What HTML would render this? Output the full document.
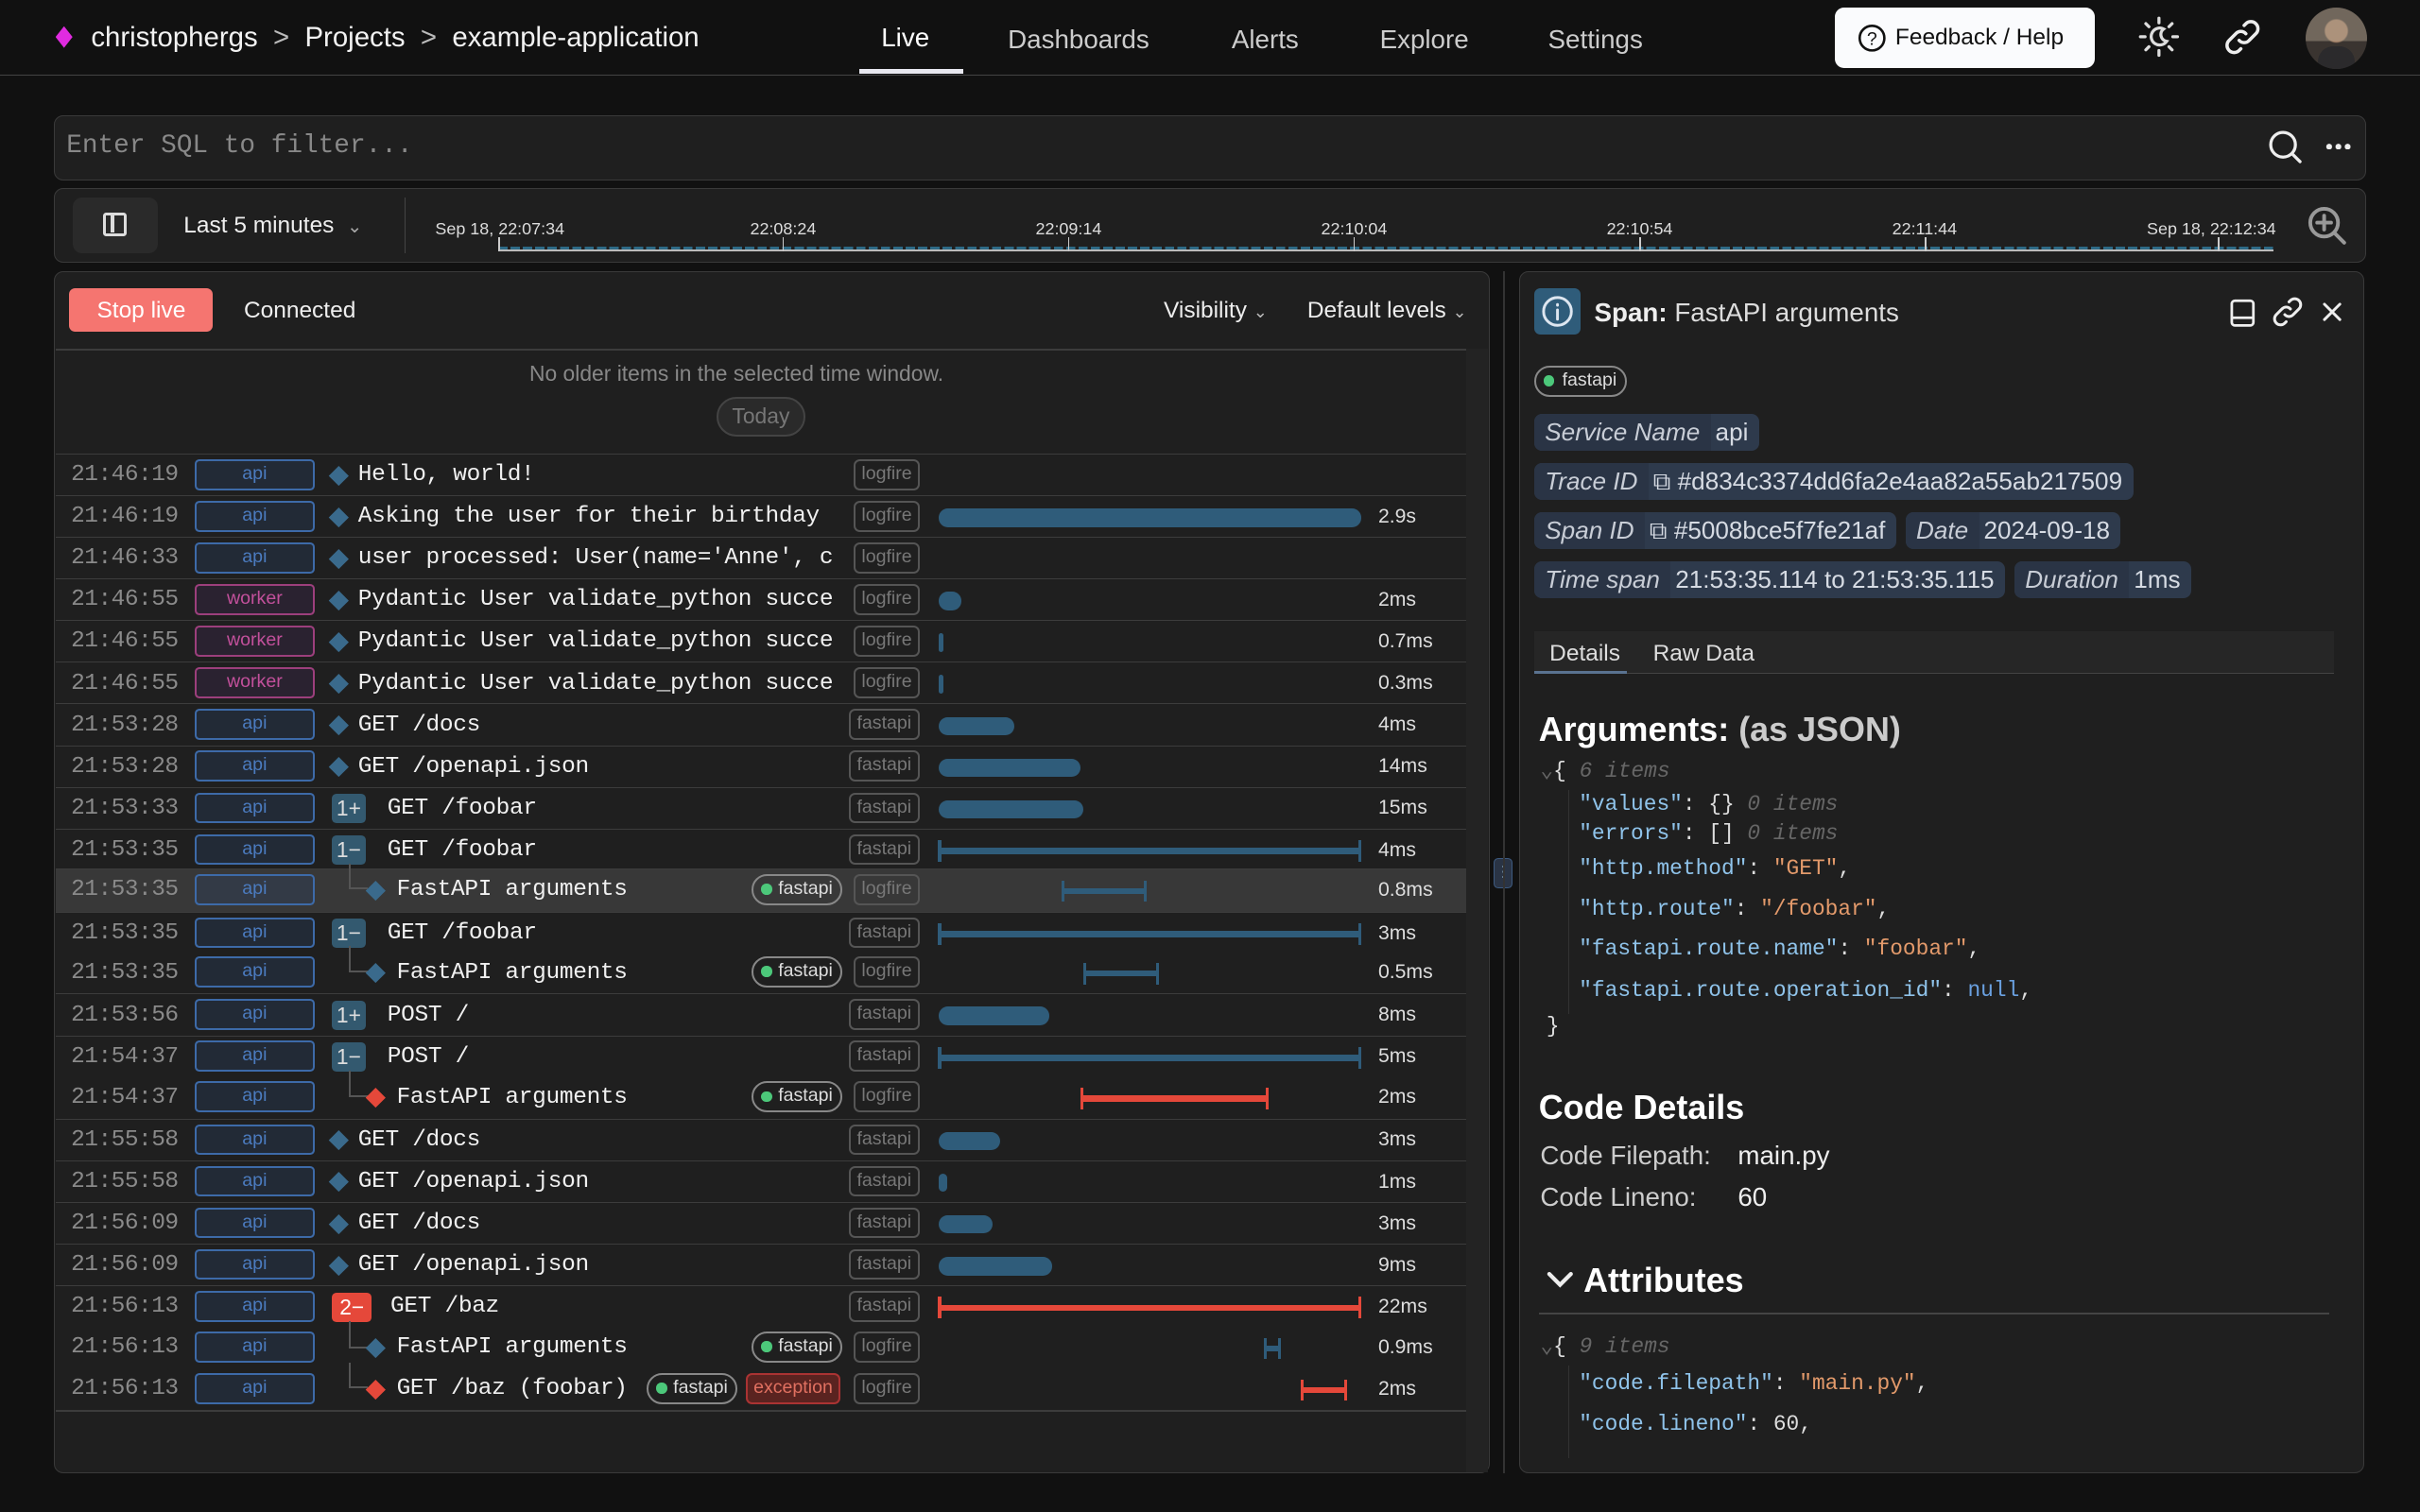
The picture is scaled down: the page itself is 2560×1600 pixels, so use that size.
<!DOCTYPE html>
<html><head><meta charset="utf-8"><style>
*{box-sizing:border-box;margin:0;padding:0}
html,body{width:2560px;height:1600px;overflow:hidden;background:#111}
#w{zoom:1.632653;width:1568px;height:980px;position:relative;font-family:"Liberation Sans",sans-serif;color:#eee}
.a{position:absolute;white-space:nowrap}
.mono{font-family:"Liberation Mono",monospace}
.nav{left:0;top:0;width:1568px;height:49px;border-bottom:1px solid #444;background:#111}
.box{background:#1f1f1f;border:1px solid #3a3a3a;border-radius:6px}
.row{position:absolute;left:36px;width:914px;height:27px}
.row.sep{border-top:1px solid #3c3c3c}
.t{position:absolute;left:10px;top:5px;font-size:15px;color:#8a8a8a;font-family:"Liberation Mono",monospace;letter-spacing:-0.3px}
.b{position:absolute;left:90px;top:3px;width:78px;height:20px;border:1.5px solid #3d6aa8;background:#222a36;border-radius:3px;color:#4b7bbf;font-size:12px;text-align:center;line-height:17px}
.b.w{border-color:#9c3f7c;background:#2a2230;color:#c2509b}
.d{position:absolute;top:9px;width:9px;height:9px;background:#3a6a8c;transform:rotate(45deg)}
.d.r{background:#e5483a}
.n{position:absolute;top:5px;font-size:15px;color:#f0f0f0;font-family:"Liberation Mono",monospace;letter-spacing:-0.2px}
.c{position:absolute;top:4px;height:19px;width:22px;background:#33596f;border-radius:3px;color:#ddd;font-size:14px;line-height:19px;text-align:center}
.c.r{background:#e5483a;color:#fff}
.tag{position:absolute;top:3px;height:20px;border:1.5px solid #555;border-radius:4px;color:#777;font-size:12px;line-height:17px;padding:0 4px}
.pill{position:absolute;top:3px;height:20px;border:1.5px solid #888;border-radius:10px;color:#ddd;font-size:12px;line-height:17px;padding:0 5px 0 16px}
.pill:before{content:"";position:absolute;left:5px;top:5px;width:7px;height:7px;border-radius:50%;background:#4cc87a}
.exc{position:absolute;top:3px;height:20px;border:1.5px solid #a33;background:#5a2320;border-radius:4px;color:#e07060;font-size:12px;line-height:17px;padding:0 4px}
.bar{position:absolute;top:8px;height:12px;background:#2f5c7a;border-radius:6px}
.ln{position:absolute;top:12px;height:4px;background:#2f5c7a;border-left:2px solid #2f5c7a}
.ln:before,.ln:after{content:"";position:absolute;top:-5px;width:2px;height:14px;background:inherit}
.ln:before{left:-2px}.ln:after{right:0}
.ln.r{background:#e5483a;border-color:#e5483a}
.du{position:absolute;left:857px;top:6px;font-size:13px;color:#ddd}
.tree{position:absolute;border-left:1.5px solid #555;border-bottom:1.5px solid #555}
.cr{position:absolute;left:994px;display:flex;gap:6px}
.chip{height:24px;background:#2e3a4c;border-radius:5px;font-size:16px;line-height:24px;color:#d6dbe3;overflow:hidden;white-space:nowrap}
.chip i{display:inline-block;padding:0 7px;background:#2a3445;color:#c8cdd6}
.chip span{padding:0 7px 0 3px}
.js{font-family:"Liberation Mono",monospace;font-size:14px;color:#ddd}
.k{color:#8fc3ea}.s{color:#e39a6b}.g{color:#666;font-style:italic}.nu{color:#6aa0e0}
</style></head><body><div id="w">
<div class="a nav"></div>
<div class="a" style="left:36px;top:17px;width:11px;height:14px;background:#e02be0;clip-path:polygon(50% 0,100% 50%,50% 100%,0 50%)"></div>
<div class="a" style="left:59px;top:14px;font-size:18px;color:#f2f2f2">christophergs&nbsp; <span style="color:#bbb">&gt;</span>&nbsp; Projects&nbsp; <span style="color:#bbb">&gt;</span>&nbsp; example-application</div>
<div class="a" style="left:571px;top:15px;font-size:17px;color:#fff">Live</div>
<div class="a" style="left:557px;top:45px;width:67px;height:3px;background:#e8e8f0"></div>
<div class="a" style="left:653px;top:16px;font-size:17px;color:#ccc">Dashboards</div>
<div class="a" style="left:798px;top:16px;font-size:17px;color:#ccc">Alerts</div>
<div class="a" style="left:894px;top:16px;font-size:17px;color:#ccc">Explore</div>
<div class="a" style="left:1003px;top:16px;font-size:17px;color:#ccc">Settings</div>
<div class="a" style="left:1189px;top:5px;width:168px;height:39px;background:#fafbfd;border-radius:6px;color:#111;font-size:15px;line-height:39px;padding-left:39px">Feedback / Help</div>
<svg class="a" style="left:1203px;top:15px" width="20" height="20" viewBox="0 0 20 20"><circle cx="10" cy="10" r="8" fill="none" stroke="#111" stroke-width="1.6"/><text x="10" y="14.5" font-size="12" text-anchor="middle" fill="#111" font-family="Liberation Sans">?</text></svg>
<svg class="a" style="left:1385px;top:10px" width="28" height="28" viewBox="0 0 28 28" stroke="#ddd" stroke-width="2" stroke-linecap="round" fill="none"><path d="M14 2v3M14 23v3M2 14h3M23 14h3M5.5 5.5l2 2M20.5 20.5l2 2M5.5 22.5l2-2M20.5 7.5l2-2"/><path d="M17 9a5.5 5.5 0 1 0 2 8 4.5 4.5 0 0 1-2-8z"/></svg>
<svg class="a" style="left:1440px;top:11px" width="26" height="26" viewBox="0 0 24 24" stroke="#eee" stroke-width="2" fill="none" stroke-linecap="round"><path d="M10 14a4 4 0 0 0 6 0l4-4a4 4 0 0 0-6-6l-1 1"/><path d="M14 10a4 4 0 0 0-6 0l-4 4a4 4 0 0 0 6 6l1-1"/></svg>
<div class="a" style="left:1494px;top:5px;width:40px;height:40px;border-radius:50%;background:radial-gradient(circle at 50% 38%,#b08a6e 0 7px,#3a3430 8px 100%);overflow:hidden"><div style="position:absolute;left:0;top:0;width:40px;height:40px;background:linear-gradient(#a89a88 0 55%,transparent 55%);opacity:.5"></div><div style="position:absolute;left:8px;top:25px;width:24px;height:20px;border-radius:10px 10px 0 0;background:#2b2a2c"></div></div>
<div class="a box" style="left:35px;top:75px;width:1498px;height:42px"></div>
<div class="a mono" style="left:43px;top:85px;font-size:17px;color:#888">Enter SQL to filter...</div>
<svg class="a" style="left:1469px;top:83px" width="24" height="24" viewBox="0 0 24 24" fill="none" stroke="#eee" stroke-width="2"><circle cx="10.5" cy="10.5" r="8"/><path d="M16.5 16.5l5 5" stroke-linecap="round"/></svg>
<div class="a" style="left:1506px;top:93px;width:18px;height:4px;background:radial-gradient(circle,#eee 1.8px,transparent 2px) 0 0/6px 4px"></div>
<div class="a box" style="left:35px;top:122px;width:1498px;height:48px"></div>
<div class="a" style="left:47px;top:128px;width:55px;height:36px;background:#2a2a2a;border-radius:6px"></div>
<div class="a" style="left:67px;top:138px;width:15px;height:15px;border:2px solid #ddd;border-radius:2px"><div style="position:absolute;left:3px;top:0;width:2px;height:11px;background:#ddd"></div></div>
<div class="a" style="left:119px;top:138px;font-size:15px;color:#eee">Last 5 minutes&nbsp; <span style="color:#aaa;font-size:12px">&#8964;</span></div>
<div class="a" style="left:262px;top:128px;width:1px;height:36px;background:#444"></div>
<div class="a" style="left:323px;top:160px;width:1150px;height:2px;background:repeating-linear-gradient(90deg,#2d6a86 0 6px,transparent 6px 8px)"></div>
<div class="a" style="left:323px;top:162px;width:1150px;height:1px;background:#bbb"></div>
<div class="a" style="left:282px;top:142px;font-size:11px;color:#ddd">Sep 18, 22:07:34</div>
<div class="a" style="left:486px;top:142px;font-size:11px;color:#ddd">22:08:24</div>
<div class="a" style="left:671px;top:142px;font-size:11px;color:#ddd">22:09:14</div>
<div class="a" style="left:856px;top:142px;font-size:11px;color:#ddd">22:10:04</div>
<div class="a" style="left:1041px;top:142px;font-size:11px;color:#ddd">22:10:54</div>
<div class="a" style="left:1226px;top:142px;font-size:11px;color:#ddd">22:11:44</div>
<div class="a" style="left:1391px;top:142px;font-size:11px;color:#ddd">Sep 18, 22:12:34</div>
<div class="a" style="left:323px;top:154px;width:1px;height:9px;background:#ccc"></div><div class="a" style="left:507px;top:154px;width:1px;height:9px;background:#ccc"></div><div class="a" style="left:692px;top:154px;width:1px;height:9px;background:#ccc"></div><div class="a" style="left:877px;top:154px;width:1px;height:9px;background:#ccc"></div><div class="a" style="left:1062px;top:154px;width:1px;height:9px;background:#ccc"></div><div class="a" style="left:1247px;top:154px;width:1px;height:9px;background:#ccc"></div><div class="a" style="left:1437px;top:154px;width:1px;height:9px;background:#ccc"></div>
<svg class="a" style="left:1494px;top:132px" width="28" height="28" viewBox="0 0 28 28" fill="none" stroke="#999" stroke-width="2.4" stroke-linecap="round"><circle cx="12" cy="12" r="9"/><path d="M19 19l6 6M12 7.5v9M7.5 12h9"/></svg>
<div class="a box" style="left:35px;top:176px;width:930px;height:779px;border-radius:6px"></div>
<div class="a" style="left:45px;top:187px;width:93px;height:28px;background:#f57570;border-radius:4px;color:#fff;font-size:15px;line-height:29px;text-align:center">Stop live</div>
<div class="a" style="left:158px;top:193px;font-size:15px;color:#eee">Connected</div>
<div class="a" style="left:754px;top:193px;font-size:15px;color:#eee">Visibility <span style="font-size:11px;color:#bbb">&#8964;</span></div>
<div class="a" style="left:847px;top:193px;font-size:15px;color:#eee">Default levels <span style="font-size:11px;color:#bbb">&#8964;</span></div>
<div class="a" style="left:36px;top:226px;width:914px;height:1px;background:#3c3c3c"></div>
<div class="a" style="left:343px;top:234px;font-size:14px;color:#888">No older items in the selected time window.</div>
<div class="a" style="left:464px;top:257px;width:58px;height:26px;border:1.5px solid #444;border-radius:13px;background:#2a2a2a;color:#777;font-size:14px;line-height:23px;text-align:center">Today</div>
<div class="a" style="left:950px;top:226px;width:14px;height:728px;background:#232323"></div>

<div class="row sep" style="top:294px"><div class="t">21:46:19</div><div class="b">api</div><div class="d" style="left:179px"></div><div class="n" style="left:196px">Hello, world!</div><div class="tag" style="left:517px">logfire</div></div>
<div class="row sep" style="top:321px"><div class="t">21:46:19</div><div class="b">api</div><div class="d" style="left:179px"></div><div class="n" style="left:196px">Asking the user for their birthday</div><div class="tag" style="left:517px">logfire</div><div class="bar" style="left:572px;width:274px"></div><div class="du">2.9s</div></div>
<div class="row sep" style="top:348px"><div class="t">21:46:33</div><div class="b">api</div><div class="d" style="left:179px"></div><div class="n" style="left:196px;width:312px;overflow:hidden">user processed: User(name='Anne', c</div><div class="tag" style="left:517px">logfire</div></div>
<div class="row sep" style="top:375px"><div class="t">21:46:55</div><div class="b w">worker</div><div class="d" style="left:179px"></div><div class="n" style="left:196px;width:312px;overflow:hidden">Pydantic User validate_python succe</div><div class="tag" style="left:517px">logfire</div><div class="bar" style="left:572px;width:15px"></div><div class="du">2ms</div></div>
<div class="row sep" style="top:402px"><div class="t">21:46:55</div><div class="b w">worker</div><div class="d" style="left:179px"></div><div class="n" style="left:196px;width:312px;overflow:hidden">Pydantic User validate_python succe</div><div class="tag" style="left:517px">logfire</div><div class="bar" style="left:572px;width:3px"></div><div class="du">0.7ms</div></div>
<div class="row sep" style="top:429px"><div class="t">21:46:55</div><div class="b w">worker</div><div class="d" style="left:179px"></div><div class="n" style="left:196px;width:312px;overflow:hidden">Pydantic User validate_python succe</div><div class="tag" style="left:517px">logfire</div><div class="bar" style="left:572px;width:3px"></div><div class="du">0.3ms</div></div>
<div class="row sep" style="top:456px"><div class="t">21:53:28</div><div class="b">api</div><div class="d" style="left:179px"></div><div class="n" style="left:196px">GET /docs</div><div class="tag" style="left:514px">fastapi</div><div class="bar" style="left:572px;width:49px"></div><div class="du">4ms</div></div>
<div class="row sep" style="top:483px"><div class="t">21:53:28</div><div class="b">api</div><div class="d" style="left:179px"></div><div class="n" style="left:196px">GET /openapi.json</div><div class="tag" style="left:514px">fastapi</div><div class="bar" style="left:572px;width:92px"></div><div class="du">14ms</div></div>
<div class="row sep" style="top:510px"><div class="t">21:53:33</div><div class="b">api</div><div class="c" style="left:179px">1+</div><div class="n" style="left:215px">GET /foobar</div><div class="tag" style="left:514px">fastapi</div><div class="bar" style="left:572px;width:94px"></div><div class="du">15ms</div></div>
<div class="row sep" style="top:537px"><div class="t">21:53:35</div><div class="b">api</div><div class="c" style="left:179px">1&minus;</div><div class="n" style="left:215px">GET /foobar</div><div class="tag" style="left:514px">fastapi</div><div class="ln" style="left:572px;width:274px"></div><div class="du">4ms</div></div>
<div class="row" style="top:563px;background:#383838;border-top:1px solid #3c3c3c;height:28px"><div class="t">21:53:35</div><div class="b" style="background:#333a46">api</div><div class="tree" style="left:190px;top:-4px;width:12px;height:17px"></div><div class="d" style="left:203px"></div><div class="n" style="left:221px">FastAPI arguments</div><div class="pill" style="left:451px">fastapi</div><div class="tag" style="left:517px">logfire</div><div class="ln" style="left:652px;width:55px"></div><div class="du">0.8ms</div></div>
<div class="row sep" style="top:591px"><div class="t">21:53:35</div><div class="b">api</div><div class="c" style="left:179px">1&minus;</div><div class="n" style="left:215px">GET /foobar</div><div class="tag" style="left:514px">fastapi</div><div class="ln" style="left:572px;width:274px"></div><div class="du">3ms</div></div>
<div class="row" style="top:617px"><div class="t">21:53:35</div><div class="b">api</div><div class="tree" style="left:190px;top:-4px;width:12px;height:17px"></div><div class="d" style="left:203px"></div><div class="n" style="left:221px">FastAPI arguments</div><div class="pill" style="left:451px">fastapi</div><div class="tag" style="left:517px">logfire</div><div class="ln" style="left:666px;width:49px"></div><div class="du">0.5ms</div></div>
<div class="row sep" style="top:644px"><div class="t">21:53:56</div><div class="b">api</div><div class="c" style="left:179px">1+</div><div class="n" style="left:215px">POST /</div><div class="tag" style="left:514px">fastapi</div><div class="bar" style="left:572px;width:72px"></div><div class="du">8ms</div></div>
<div class="row sep" style="top:671px"><div class="t">21:54:37</div><div class="b">api</div><div class="c" style="left:179px">1&minus;</div><div class="n" style="left:215px">POST /</div><div class="tag" style="left:514px">fastapi</div><div class="ln" style="left:572px;width:274px"></div><div class="du">5ms</div></div>
<div class="row" style="top:698px"><div class="t">21:54:37</div><div class="b">api</div><div class="tree" style="left:190px;top:-4px;width:12px;height:17px"></div><div class="d r" style="left:203px"></div><div class="n" style="left:221px">FastAPI arguments</div><div class="pill" style="left:451px">fastapi</div><div class="tag" style="left:517px">logfire</div><div class="ln r" style="left:664px;width:122px"></div><div class="du">2ms</div></div>
<div class="row sep" style="top:725px"><div class="t">21:55:58</div><div class="b">api</div><div class="d" style="left:179px"></div><div class="n" style="left:196px">GET /docs</div><div class="tag" style="left:514px">fastapi</div><div class="bar" style="left:572px;width:40px"></div><div class="du">3ms</div></div>
<div class="row sep" style="top:752px"><div class="t">21:55:58</div><div class="b">api</div><div class="d" style="left:179px"></div><div class="n" style="left:196px">GET /openapi.json</div><div class="tag" style="left:514px">fastapi</div><div class="bar" style="left:572px;width:6px"></div><div class="du">1ms</div></div>
<div class="row sep" style="top:779px"><div class="t">21:56:09</div><div class="b">api</div><div class="d" style="left:179px"></div><div class="n" style="left:196px">GET /docs</div><div class="tag" style="left:514px">fastapi</div><div class="bar" style="left:572px;width:35px"></div><div class="du">3ms</div></div>
<div class="row sep" style="top:806px"><div class="t">21:56:09</div><div class="b">api</div><div class="d" style="left:179px"></div><div class="n" style="left:196px">GET /openapi.json</div><div class="tag" style="left:514px">fastapi</div><div class="bar" style="left:572px;width:74px"></div><div class="du">9ms</div></div>
<div class="row sep" style="top:833px"><div class="t">21:56:13</div><div class="b">api</div><div class="c r" style="left:179px;width:26px">2&minus;</div><div class="n" style="left:217px">GET /baz</div><div class="tag" style="left:514px">fastapi</div><div class="ln r" style="left:572px;width:274px"></div><div class="du">22ms</div></div>
<div class="row" style="top:860px"><div class="t">21:56:13</div><div class="b">api</div><div class="tree" style="left:190px;top:-4px;width:12px;height:17px;border-bottom:0"></div><div style="position:absolute;left:190px;top:13px;width:12px;border-top:1.5px solid #555"></div><div class="d" style="left:203px"></div><div class="n" style="left:221px">FastAPI arguments</div><div class="pill" style="left:451px">fastapi</div><div class="tag" style="left:517px">logfire</div><div class="ln" style="left:783px;width:11px"></div><div class="du">0.9ms</div></div>
<div class="row" style="top:887px"><div class="t">21:56:13</div><div class="b">api</div><div class="tree" style="left:190px;top:-4px;width:12px;height:17px"></div><div class="d r" style="left:203px"></div><div class="n" style="left:221px">GET /baz (foobar)</div><div class="pill" style="left:383px">fastapi</div><div class="exc" style="left:447px">exception</div><div class="tag" style="left:517px">logfire</div><div class="ln r" style="left:807px;width:30px"></div><div class="du">2ms</div></div>
<div class="a" style="left:36px;top:914px;width:914px;height:1px;background:#3c3c3c"></div>

<div class="a" style="left:968px;top:556px;width:12px;height:20px;background:#2a3445;border:1px solid #3d5a80;border-radius:3px;color:#8ab;font-size:10px;line-height:18px;text-align:center">&#8942;</div>
<div class="a" style="left:974px;top:176px;width:1px;height:779px;background:#333"></div>

<div class="a box" style="left:984px;top:176px;width:548px;height:779px"></div>
<div class="a" style="left:994px;top:187px;width:30px;height:30px;background:#2f5c7a;border-radius:4px"></div>
<svg class="a" style="left:997px;top:190px" width="24" height="24" viewBox="0 0 24 24" fill="none" stroke="#dde6f0" stroke-width="1.8"><circle cx="12" cy="12" r="9"/><path d="M12 11v6M12 7.5v.5" stroke-linecap="round"/></svg>
<div class="a" style="left:1033px;top:193px;font-size:17px;color:#ddd"><b style="color:#eee">Span:</b> FastAPI arguments</div>
<svg class="a" style="left:1443px;top:193px" width="20" height="20" viewBox="0 0 20 20" fill="none" stroke="#eee" stroke-width="1.7"><rect x="3" y="2" width="14" height="16" rx="2"/><path d="M3 13h14"/></svg>
<svg class="a" style="left:1471px;top:191px" width="22" height="22" viewBox="0 0 24 24" stroke="#eee" stroke-width="2" fill="none" stroke-linecap="round"><path d="M10 14a4 4 0 0 0 6 0l4-4a4 4 0 0 0-6-6l-1 1"/><path d="M14 10a4 4 0 0 0-6 0l-4 4a4 4 0 0 0 6 6l1-1"/></svg>
<svg class="a" style="left:1503px;top:194px" width="16" height="16" viewBox="0 0 16 16" stroke="#eee" stroke-width="1.8" stroke-linecap="round"><path d="M3 3l10 10M13 3L3 13"/></svg>
<div class="a" style="left:994px;top:237px;width:60px;height:20px;border:1.5px solid #888;border-radius:10px;font-size:12px;color:#ddd;line-height:17px;padding-left:17px"><span style="position:absolute;left:5px;top:5px;width:7px;height:7px;border-radius:50%;background:#4cc87a"></span>fastapi</div>
<div class="cr" style="top:268px"><div class="chip"><i>Service Name</i><span>api</span></div></div>
<div class="cr" style="top:300px"><div class="chip"><i>Trace ID</i><span>&#x29C9;&#xFE0E; #d834c3374dd6fa2e4aa82a55ab217509</span></div></div>
<div class="cr" style="top:332px"><div class="chip"><i>Span ID</i><span>&#x29C9;&#xFE0E; #5008bce5f7fe21af</span></div><div class="chip"><i>Date</i><span>2024-09-18</span></div></div>
<div class="cr" style="top:364px"><div class="chip"><i>Time span</i><span>21:53:35.114 to 21:53:35.115</span></div><div class="chip"><i>Duration</i><span>1ms</span></div></div>
<div class="a" style="left:994px;top:409px;width:518px;height:28px;background:#262626;border-bottom:1px solid #444"></div>
<div class="a" style="left:994px;top:435px;width:60px;height:2px;background:#5a7290"></div>
<div class="a" style="left:1004px;top:415px;font-size:15px;color:#ddd">Details</div>
<div class="a" style="left:1071px;top:415px;font-size:15px;color:#ddd">Raw Data</div>
<div class="a" style="left:997px;top:460px;font-size:22px;font-weight:bold;color:#fff">Arguments: <span style="color:#ccc">(as JSON)</span></div>
<div class="a js" style="left:998px;top:491px"><span class="g" style="font-style:normal">&#8964;</span>{ <span class="g">6 items</span></div>
<div class="a" style="left:1016px;top:512px;width:1px;height:145px;background:#333"></div>
<div class="a js" style="left:1023px;top:513px"><span class="k">"values"</span>: {} <span class="g">0 items</span></div>
<div class="a js" style="left:1023px;top:532px"><span class="k">"errors"</span>: [] <span class="g">0 items</span></div>
<div class="a js" style="left:1023px;top:555px"><span class="k">"http.method"</span>: <span class="s">"GET"</span>,</div>
<div class="a js" style="left:1023px;top:581px"><span class="k">"http.route"</span>: <span class="s">"/foobar"</span>,</div>
<div class="a js" style="left:1023px;top:607px"><span class="k">"fastapi.route.name"</span>: <span class="s">"foobar"</span>,</div>
<div class="a js" style="left:1023px;top:634px"><span class="k">"fastapi.route.operation_id"</span>: <span class="nu">null</span>,</div>
<div class="a js" style="left:1002px;top:657px">}</div>
<div class="a" style="left:997px;top:705px;font-size:22px;font-weight:bold;color:#fff">Code Details</div>
<div class="a" style="left:998px;top:739px;font-size:17px;color:#ccc">Code Filepath:</div><div class="a" style="left:1126px;top:739px;font-size:17px;color:#eee">main.py</div>
<div class="a" style="left:998px;top:766px;font-size:17px;color:#ccc">Code Lineno:</div><div class="a" style="left:1126px;top:766px;font-size:17px;color:#eee">60</div>
<svg class="a" style="left:1001px;top:821px" width="20" height="18" viewBox="0 0 20 18" fill="none" stroke="#eee" stroke-width="2.6" stroke-linecap="round"><path d="M3 5l7 7 7-7"/></svg>
<div class="a" style="left:1026px;top:817px;font-size:22px;font-weight:bold;color:#fff">Attributes</div>
<div class="a" style="left:997px;top:851px;width:512px;height:1px;background:#444"></div>
<div class="a js" style="left:998px;top:864px"><span class="g" style="font-style:normal">&#8964;</span>{ <span class="g">9 items</span></div>
<div class="a" style="left:1016px;top:885px;width:1px;height:60px;background:#333"></div>
<div class="a js" style="left:1023px;top:889px"><span class="k">"code.filepath"</span>: <span class="s">"main.py"</span>,</div>
<div class="a js" style="left:1023px;top:915px"><span class="k">"code.lineno"</span>: 60,</div>
</div></body></html>
